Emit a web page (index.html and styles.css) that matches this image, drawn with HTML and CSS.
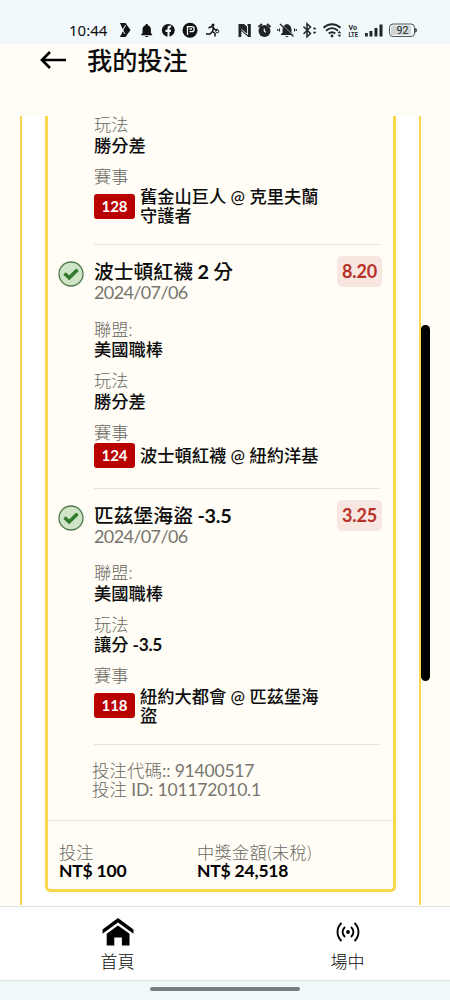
FILE: index.html
```html
<!DOCTYPE html>
<html lang="zh-Hant">
<head>
<meta charset="utf-8">
<title>我的投注</title>
<link rel="stylesheet" href="styles.css">
</head>
<body>
<div class="status">
  <span class="clock">10:44</span>
  <svg class="status-icons" width="340" height="20" viewBox="0 0 340 20">
    <g fill="#111">
      <path d="M10 3h5.500l5 7-5 7H10l3-7z"/><path d="M9.500 5l5.500 9M15.500 5l-5 10" stroke="#f1f9fd" stroke-width="1"/>
      <path d="M36.700 4c.8 0 1.200.5 1.200 1.200 2.200.6 3 2.400 3 4.800v3l1.300 1.500v.8H31.200v-.8l1.300-1.500v-3c0-2.400.8-4.200 3-4.800 0-.7.400-1.200 1.200-1.200zM35 16h3.400c-.3 1.300-3.100 1.300-3.400 0z"/>
      <circle cx="58.300" cy="10.300" r="6.400"/><path d="M57.500 17v-5h-2v-2.200h2V8.200c0-2 1.200-3 3.600-2.600v1.900c-1.300-.1-1.600.2-1.600 1v1.300h1.700l-.4 2.200h-1.300v5z" fill="#f1f9fd"/>
      <circle cx="80" cy="10.300" r="7.500"/><path d="M77.500 15V6.700h4.200c3.300 0 3.300 4.900 0 4.900H79.500M79.500 9h2.500" stroke="#f1f9fd" stroke-width="1.300" fill="none"/>
      <circle cx="103" cy="5" r="1.500"/><path d="M98.500 8l3-1.500 2 1-1 4 2.500 2v3M102.500 11.500L100 14h-4M103.500 8l2 2 2-.5" fill="none" stroke="#111" stroke-width="1.500"/><circle cx="107.300" cy="11.300" r="1.500" fill="none" stroke="#111"/>
    </g>
    <g fill="#202529">
      <path d="M128.500 4H134l3.500 3V4h3.300v13h-2.500l-7-6v6h-2.800z"/><path d="M131.500 9.500L137.500 14.500V6" fill="none" stroke="#f1f9fd" stroke-width="0.900"/>
      <circle cx="154.500" cy="11" r="6"/><path d="M148.500 7l3.500-3M157 4l3.500 3" stroke="#202529" stroke-width="2"/><path d="M154.300 8.500v2.800l1.500 1" fill="none" stroke="#f1f9fd" stroke-width="1.100"/>
      <path d="M177 4c3.200.7 4.500 3 4.500 6v2.500l2 2.500h-13l2-2.500V10c0-3 1.300-5.300 4.500-6zM175.500 16h3c-.3 1.300-2.700 1.300-3 0z"/><path d="M171.500 4.500l13 12" stroke="#f1f9fd" stroke-width="1"/><path d="M170 4l13.500 12.500" stroke="#202529" stroke-width="1.300"/><path d="M169.500 8.500v3M167.800 9v2M184.500 8.500v3M186.300 9v2" stroke="#202529" stroke-width="1.100"/>
      <path d="M193.500 6.500l7 7-3.500 3.200V3.800l3.500 3.200-7 7" fill="none" stroke="#202529" stroke-width="1.500"/><path d="M202.700 9.300l1.900-2.300 1.900 2.300zM202.700 11.700l1.900 2.300 1.900-2.300z"/>
      <path d="M213.500 7.800c5-4.700 12-4.700 17 0M216 10.800c3.700-3.400 8.300-3.400 12 0M218.700 13.500c2.200-1.800 4.400-1.800 6.600 0" fill="none" stroke="#202529" stroke-width="1.900"/><circle cx="222" cy="16" r="1.400"/><path d="M227.500 13.300l1.900-2.300 1.900 2.300zM227.500 14.700l1.900 2.300 1.900-2.300z"/>
      <text x="238.500" y="9.700" class="volte" textLength="8.500" lengthAdjust="spacingAndGlyphs">Vo</text><text x="238.500" y="16.800" class="volte" textLength="9.500" lengthAdjust="spacingAndGlyphs">LTE</text>
      <rect x="255" y="13" width="2.800" height="3.500"/><rect x="259.500" y="11" width="2.900" height="5.500"/><rect x="264.500" y="8" width="2.900" height="8.500"/><rect x="269.500" y="4.500" width="3" height="12"/>
      <rect x="279.500" y="4" width="25" height="12.500" rx="3.500" fill="#f1f9fd" stroke="#50575a"/><rect x="281" y="5.500" width="20" height="9.500" rx="2" fill="#cfd4d5"/><path d="M305.500 8.200c1.500.7 1.500 3.400 0 4.100z" stroke="#50575a"/>
      <text x="286.500" y="14" class="battery">92</text>
    </g>
  </svg>
</div>
<header class="header">
  <svg width="28" height="20" viewBox="0 0 28 20"><path d="M11 2L3 10l8 8M3 10h24" fill="none" stroke="#000" stroke-width="2.700"/></svg>
  <h1 class="heading">我的投注</h1>
</header>
<main class="scroll">
  <div class="panel">
    <div class="card">
      <section class="leg leg-first">
        <div class="field"><div class="label">玩法</div><div class="value">勝分差</div></div>
        <div class="field"><div class="label">賽事</div>
          <div class="match"><span class="code">128</span><span class="teams">舊金山巨人 @ 克里夫蘭<br>守護者</span></div></div>
      </section>
      <section class="leg">
        <svg class="check" width="26" height="26" viewBox="0 0 26 26"><circle cx="13" cy="13" r="12" fill="#cfe3c6" stroke="#4f7a4c" stroke-width="1.300"/><path d="M6.500 12.500l4.700 4.300 8.300-8" fill="none" stroke="#2f7a2c" stroke-width="3.500"/></svg>
        <div class="top"><div><h2 class="title">波士頓紅襪 <span class="latin">2</span> 分</h2><div class="date">2024/07/06</div></div><span class="odds">8.20</span></div>
        <div class="field"><div class="label">聯盟:</div><div class="value">美國職棒</div></div>
        <div class="field"><div class="label">玩法</div><div class="value">勝分差</div></div>
        <div class="field"><div class="label">賽事</div>
          <div class="match"><span class="code">124</span><span class="teams">波士頓紅襪 @ 紐約洋基</span></div></div>
      </section>
      <section class="leg">
        <svg class="check" width="26" height="26" viewBox="0 0 26 26"><circle cx="13" cy="13" r="12" fill="#cfe3c6" stroke="#4f7a4c" stroke-width="1.300"/><path d="M6.500 12.500l4.700 4.300 8.300-8" fill="none" stroke="#2f7a2c" stroke-width="3.500"/></svg>
        <div class="top"><div><h2 class="title">匹茲堡海盜 <span class="latin">-3.5</span></h2><div class="date">2024/07/06</div></div><span class="odds">3.25</span></div>
        <div class="field"><div class="label">聯盟:</div><div class="value">美國職棒</div></div>
        <div class="field"><div class="label">玩法</div><div class="value">讓分 <span class="latin">-3.5</span></div></div>
        <div class="field"><div class="label">賽事</div>
          <div class="match"><span class="code">118</span><span class="teams">紐約大都會 @ 匹茲堡海<br>盜</span></div></div>
      </section>
      <div class="ids"><div>投注代碼<span class="number">:: 91400517</span></div><div>投注<span class="number"> ID: 101172010.1</span></div></div>
      <div class="totals">
        <div><div class="total-label">投注</div><div class="amount">NT$ 100</div></div>
        <div><div class="total-label prize">中獎金額(未稅)</div><div class="amount">NT$ 24,518</div></div>
      </div>
    </div>
  </div>
  <div class="scrollbar"></div>
</main>
<nav class="nav">
  <a class="tab tab-home"><svg width="32" height="28" viewBox="0 0 32 28"><path d="M16 0L31.500 11.500v4.200L16 4.600.5 15.700v-4.200z"/><path d="M16 7.500l11.500 8.300V27.500h-7.600v-8h-7.600v8H4.700V15.800z"/></svg><span>首頁</span></a>
  <a class="tab tab-live"><svg width="24" height="28" viewBox="0 0 24 28"><circle cx="12" cy="14" r="1.900"/><path d="M5.500 5C.2 10 .2 18 5.500 23M18.500 5c5.300 5 5.300 13 0 18M9 9C5.800 12 5.800 16 9 19M15 9c3.200 3 3.200 7 0 10" fill="none" stroke="#000" stroke-width="1.900"/></svg><span>場中</span></a>
</nav>
<div class="gesture"><div class="pill"></div></div>
</body>
</html>
```
FILE: styles.css
```css
* { box-sizing: border-box; }
body {
  margin: 0;
  width: 450px;
  height: 1000px;
  display: flex;
  flex-direction: column;
  overflow: hidden;
  background: #fffdf5;
  color: #0c0c0c;
  font-family: Lato, "Noto Sans CJK TC", sans-serif;
}
.status {
  height: 44px;
  flex: none;
  display: flex;
  padding: 20px 0 0 69px;
  background: #f1f9fd;
}
.clock { flex: none; width: 41px; font: 15px/21px "Noto Sans", sans-serif; }
.status-icons { flex: none; }
.volte { font: bold 8px Roboto, sans-serif; }
.battery { font: 400 10.500px Roboto, sans-serif; }
.header {
  height: 72px;
  flex: none;
  display: flex;
  align-items: flex-start;
  gap: 20px;
  padding: 0 0 0 39px;
}
.header svg { margin-top: 6px; }
.heading { margin: 0; font-size: 25.200px; font-weight: 500; line-height: 33px; }
.scroll { position: relative; height: 790px; flex: none; padding: 0 29px 0 20px; overflow: hidden; }
.panel {
  height: 790px;
  padding: 0 23px;
  border: solid #f8d74e;
  border-width: 0 2px;
  background: #fff;
}
.card {
  height: 777px;
  border: 3px solid #f8d74e;
  border-top: 0;
  border-radius: 0 0 5px 5px;
  background: #fffdf5;
}
.leg {
  position: relative;
  display: flex;
  flex-direction: column;
  gap: 10.500px;
  margin: 0 13px 0 46px;
  padding: 15px 0 19.500px;
  border-bottom: 1px solid #e5e4df;
}
.leg-first { padding: 0 0 19px; margin-top: -1px; }
.check { position: absolute; left: -36px; top: 16px; }
.top { display: flex; justify-content: space-between; margin-bottom: 7px; }
.title { margin: 0; font-size: 19.800px; font-weight: 500; line-height: 23px; word-spacing: -0.500px; }
.latin { font-weight: 700; letter-spacing: -0.250px; }
.date { font-size: 18px; line-height: 19px; letter-spacing: -0.620px; color: #77756f; }
.odds {
  align-self: flex-start;
  width: 45px;
  height: 31px;
  margin: -4px -2px 0 0;
  border-radius: 5px;
  background: #f8e7e1;
  color: #b93227;
  font-size: 18px;
  font-weight: 700;
  line-height: 31px;
  letter-spacing: -0.200px;
  text-align: center;
}
.label { font-size: 17.200px; font-weight: 300; line-height: 20.500px; color: #6b6963; }
.value { font-size: 17.300px; font-weight: 500; line-height: 20.500px; word-spacing: -0.500px; }
.match { display: flex; align-items: center; gap: 5px; min-height: 25px; }
.code {
  width: 41px;
  height: 25px;
  border-radius: 3px;
  background: #b80000;
  color: #fff;
  font-size: 15px;
  font-weight: 700;
  line-height: 25px;
  text-align: center;
}
.teams { font-size: 17.250px; font-weight: 500; line-height: 19px; white-space: nowrap; }
.ids {
  height: 76px;
  padding: 17px 0 0 44px;
  border-bottom: 1px solid #e5e4df;
  color: #6b6963;
  font-size: 17.500px;
  font-weight: 300;
  line-height: 18.500px;
}
.number { font-weight: 400; letter-spacing: -0.200px; color: #77756f; }
.totals { display: grid; grid-template-columns: 138px 1fr; padding: 22px 0 0 11px; }
.total-label { font-size: 17.200px; font-weight: 300; line-height: 19px; color: #6b6963; }
.prize { letter-spacing: 0.350px; }
.amount { font-size: 17.500px; font-weight: 700; line-height: 18px; letter-spacing: -0.200px; color: #000; }
.nav { height: 75px; flex: none; display: grid; grid-template-columns: 1fr 1fr; border: solid #dfe3e2; border-width: 1px 0; background: #fff; }
.tab { display: flex; flex-direction: column; align-items: center; padding-top: 11px; font-size: 17px; font-weight: 300; line-height: 32px; }
.tab-home { padding-left: 10px; }
.tab-live { padding-left: 20px; }
.gesture { flex: 1; display: flex; justify-content: center; padding-top: 6px; background: #f1f8fa; }
.pill { width: 150px; height: 4px; border-radius: 2px; background: #777f7e; }
.scrollbar { position: absolute; left: 421px; top: 209px; width: 9px; height: 356px; border-radius: 5px; background: #000; }
```
